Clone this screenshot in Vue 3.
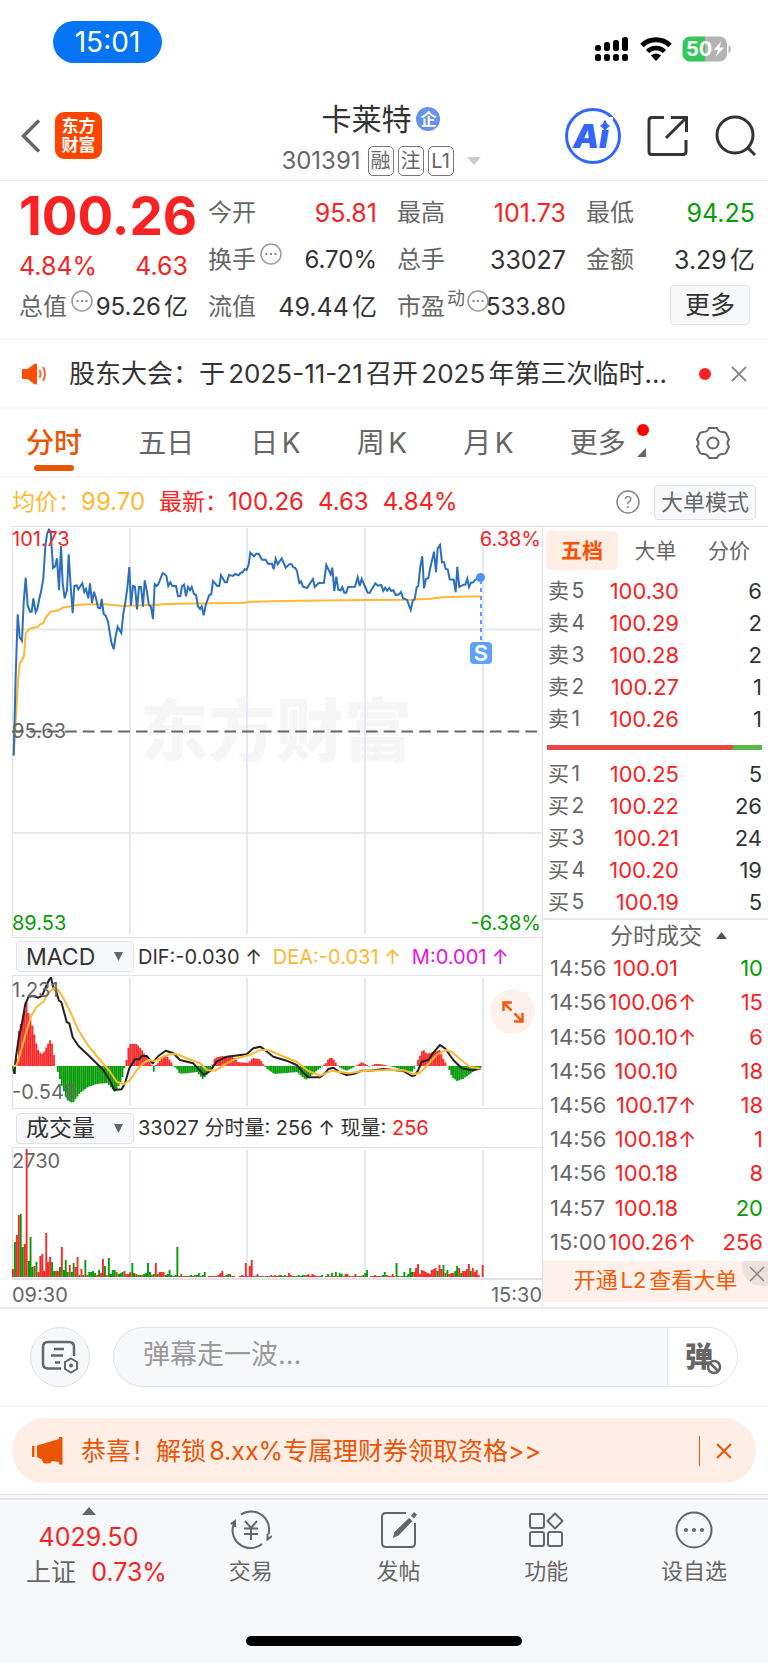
<template>
  <div class="page">
    <div class="status">
      <span class="clock">15:01</span>
      <div class="status-icons">
        <svg width="36" height="26" viewBox="0 0 36 26" aria-hidden="true">
          <g v-for="(top, i) in [9, 6, 4, 1]" :key="i">
            <rect :x="1 + i * 9" :y="top" width="6" :height="15 - top" rx="2.5" />
            <rect :x="1 + i * 9" y="18" width="6" height="7" rx="2.5" />
          </g>
        </svg>
        <svg width="32" height="26" viewBox="0 0 32 26" aria-hidden="true">
          <path d="M2 9.500a20 20 0 0 1 28 0" fill="none" stroke="#000" stroke-width="5" />
          <path d="M7.500 15.500a12 12 0 0 1 17 0" fill="none" stroke="#000" stroke-width="4.500" />
          <path d="M16 25l-5-5.500a7.500 7.500 0 0 1 10 0z" />
        </svg>
        <svg width="50" height="26" viewBox="0 0 50 26" aria-hidden="true">
          <path d="M8 0.500h15v25H8a7.500 7.500 0 0 1-7.500-7.500V8A7.500 7.500 0 0 1 8 0.500z" fill="#34c759" />
          <path d="M23 0.500h14.500A7.500 7.500 0 0 1 45 8v10a7.500 7.500 0 0 1-7.500 7.500H23z" fill="#b3b3b3" />
          <path d="M46.500 9c3 1 3 7 0 8z" fill="#b3b3b3" />
          <text x="4" y="20" class="battery-text">50</text>
          <path d="M39.500 5l-8 9H36l-2.500 7 8.500-9.500h-4.500z" fill="#fff" />
        </svg>
      </div>
    </div>

    <header class="header">
      <div class="header-left">
        <button class="icon-btn" aria-label="返回">
          <svg width="20" height="34" viewBox="0 0 20 34"><path d="M18 1.500L2.500 17 18 32.500" fill="none" stroke="#666" stroke-width="3.500" /></svg>
        </button>
        <a class="logo" href="#"><span>东方</span><span>财富</span></a>
      </div>
      <div class="title">
        <h1>卡莱特<span class="corp">企</span></h1>
        <div class="code">
          <span class="code-num">301391</span>
          <span class="tag">融</span><span class="tag">注</span><span class="tag">L1</span>
          <svg class="code-arrow" width="14" height="8" viewBox="0 0 14 8"><path d="M0 0h14L7 8z" fill="#ccc" /></svg>
        </div>
      </div>
      <div class="header-right">
        <button class="icon-btn" aria-label="Ai">
          <svg width="56" height="58" viewBox="0 0 56 58">
            <circle cx="28" cy="29" r="26.500" fill="#fff" stroke="#3366ff" stroke-width="3" />
            <text x="8 34" y="41" class="ai-text">Ai</text>
            <path d="M35 10h13v12.500H35z" fill="#fff" />
            <path d="M40 13.500q1.200 4.500 4.500 5.500-3.300 1-4.500 5-1.200-4-4.500-5 3.300-1 4.500-5.500z" fill="#3366ff" stroke="#3366ff" />
          </svg>
        </button>
        <button class="icon-btn" aria-label="分享">
          <svg width="42" height="42" viewBox="0 0 42 42" fill="none" stroke="#333" stroke-width="3">
            <path d="M17 2.500H5Q2 2.500 2 5.500v31q0 3 3 3h31q3 0 3-3V25" />
            <path d="M24 2.500h15.500V17M39 3L19 23" />
          </svg>
        </button>
        <button class="icon-btn" aria-label="搜索">
          <svg width="42" height="42" viewBox="0 0 42 42" fill="none" stroke="#333" stroke-width="3">
            <circle cx="20" cy="20" r="18" /><path d="M33 33l7 7" />
          </svg>
        </button>
      </div>
    </header>

    <section class="quote">
      <div class="price-block">
        <strong>100.26</strong>
        <div class="change"><span>4.84%</span><span>4.63</span></div>
      </div>
      <div v-for="q in quotes" :key="q.label" class="cell">
        <span class="cell-label">{{ q.label }}</span>
        <sup v-if="q.sup">{{ q.sup }}</sup>
        <svg v-if="q.tip" class="tip" width="22" height="22" viewBox="0 0 22 22">
          <circle cx="11" cy="11" r="10" fill="none" stroke="#999" stroke-width="1.500" />
          <path d="M5.500 11h2M10 11h2M14.500 11h2" stroke="#888" stroke-width="2" />
        </svg>
        <span class="cell-value" :class="q.tone">{{ q.value }}</span>
      </div>
      <div class="cell more"><button class="soft-btn">更多</button></div>
    </section>

    <section class="notice">
      <svg width="26" height="22" viewBox="0 0 26 22" aria-hidden="true">
        <path d="M1 6h4.500L13 0.500q2-0.500 2 1.500v18q0 2-2 1.500L5.500 16H1q-1 0-1-1V7q0-1 1-1z" fill="#ff4d00" />
        <path d="M17.500 7q2 4 0 8M21 4q4 7 0 14" fill="none" stroke="#ff6a2b" stroke-width="2" />
      </svg>
      <a href="#">股东大会：于2025-11-21召开2025年第三次临时...</a>
      <i class="dot"></i>
      <button class="icon-btn" aria-label="关闭">
        <svg width="16" height="16" viewBox="0 0 16 16"><path d="M1 1l14 14M15 1L1 15" stroke="#888" stroke-width="1.800" /></svg>
      </button>
    </section>

    <nav class="periods">
      <button v-for="(p, i) in periods" :key="p" :class="{ active: i === 0, expandable: i === 5 }">
        {{ p }}
        <template v-if="i === 5">
          <i class="dot period-dot"></i>
          <svg class="corner" width="9" height="9" viewBox="0 0 9 9"><path d="M9 0v9H0z" fill="#666" /></svg>
        </template>
      </button>
      <button aria-label="设置">
        <svg width="34" height="34" viewBox="0 0 34 34" fill="none" stroke="#666" stroke-width="2">
          <path d="M13 2h8q1.500 4 5.500 4 2 0 3.500 1l3 6.500q-3 3.500 0 7L30 27q-1.500 1-3.500 1-4 0-5.500 4h-8q-1.500-4-5.500-4-2 0-3.500-1l-3-6.500q3-3.500 0-7L4 7q1.500-1 3.500-1Q11.500 6 13 2z" />
          <circle cx="17" cy="17" r="5.500" />
        </svg>
      </button>
    </nav>

    <div class="summary">
      <span class="amber"><small>均价：</small>99.70</span>
      <span class="up"><small>最新：</small>100.26</span>
      <span class="up">4.63</span>
      <span class="up">4.84%</span>
      <svg class="help" width="24" height="24" viewBox="0 0 24 24">
        <circle cx="12" cy="12" r="11" fill="none" stroke="#888" stroke-width="1.500" />
        <text x="12" y="18" text-anchor="middle" class="help-text">?</text>
      </svg>
      <button class="soft-btn mode">大单模式</button>
    </div>

    <main class="board">
      <div class="charts">
        <svg class="chart" viewBox="0 0 530 411">
          <text x="128" y="230" class="watermark">东方财富</text>
          <path d="M0.500 411V0.500H530" class="frame" />
          <path d="M118 2v406M235 2v406M353 2v406M471 2v406M0 103.500h530M0 307h530" class="grid" />
          <path d="M0 205.500h528" stroke="#666" stroke-width="2" stroke-dasharray="11.700 6" />
          <polyline :points="average" fill="none" stroke="#fdb933" stroke-width="2" />
          <polyline :points="price" fill="none" stroke="#2c70bd" stroke-width="2" />
          <path d="M469 54v63" stroke="#5a9cf8" stroke-width="2" stroke-dasharray="4 4" />
          <circle cx="468.500" cy="51.500" r="4.500" fill="#4e93f5" />
          <rect x="458" y="116" width="22" height="22" rx="4" fill="#5fa1fb" />
          <text x="469" y="135" text-anchor="middle" class="sell-mark">S</text>
          <text x="0" y="20" class="axis up">101.73</text>
          <text x="529" y="20" text-anchor="end" class="axis up">6.38%</text>
          <text x="0" y="212" class="axis">95.63</text>
          <text x="0" y="404" class="axis down">89.53</text>
          <text x="529" y="404" text-anchor="end" class="axis down">-6.38%</text>
        </svg>

        <div class="indicator">
          <label class="picker">
            <select aria-label="指标"><option>MACD</option></select>
            <svg width="9" height="9" viewBox="0 0 9 9"><path d="M0 0h9L4.500 9z" fill="#666" /></svg>
          </label>
          <span>DIF:-0.030 ↑</span>
          <span class="amber macd-dea">DEA:-0.031 ↑</span>
          <span class="magenta macd-dea">M:0.001 ↑</span>
        </div>
        <div class="macd-wrap">
          <svg class="chart" viewBox="0 0 530 133">
            <path d="M0.500 133V0.500H530" class="frame" />
            <path d="M118 3v128M235 3v128M353 3v128M471 3v128" class="grid" />
            <path :d="macdUp" fill="#f92a2a" />
            <path :d="macdDown" fill="#079c07" />
            <polyline :points="dif" fill="none" stroke="#222" stroke-width="2" stroke-linejoin="round" />
            <polyline :points="dea" fill="none" stroke="#fdb933" stroke-width="2" stroke-linejoin="round" />
            <text x="0" y="22" class="axis">1.231</text>
            <text x="0" y="124" class="axis">-0.549</text>
          </svg>
          <button class="expand" aria-label="放大">
            <svg width="22" height="22" viewBox="0 0 22 22" fill="none" stroke="#f25b0a" stroke-width="2.500">
              <path d="M10 1.500H1.500V10M1.500 1.500l8 8M20.500 12v8.500H12M20.500 20.500l-8-8" />
            </svg>
          </button>
        </div>

        <div class="indicator volume-head">
          <label class="picker">
            <select aria-label="副图指标"><option>成交量</option></select>
            <svg width="9" height="9" viewBox="0 0 9 9"><path d="M0 0h9L4.500 9z" fill="#666" /></svg>
          </label>
          <span>33027 分时量: 256 ↑ 现量: <em>256</em></span>
        </div>
        <svg class="chart" viewBox="0 0 530 133">
          <path d="M0.500 133V0.500H530" class="frame" />
          <path d="M118 3v128M235 3v128M353 3v128M471 3v128" class="grid" />
          <path :d="volumeUp" fill="#f92a2a" />
          <path :d="volumeDown" fill="#079c07" />
          <path d="M0 132h530" stroke="#dfe2e9" stroke-width="2" />
          <text x="0" y="21" class="axis">2730</text>
        </svg>
        <div class="times"><span>09:30</span><span>15:30</span></div>
      </div>

      <aside class="side">
        <div class="side-tabs">
          <button class="on">五档</button><button>大单</button><button>分价</button>
        </div>
        <table class="depth">
          <tbody>
            <tr v-for="r in asks" :key="r[0]"><th>{{ r[0] }}</th><td class="up">{{ r[1] }}</td><td>{{ r[2] }}</td></tr>
          </tbody>
        </table>
        <div class="ratio"></div>
        <table class="depth">
          <tbody>
            <tr v-for="r in bids" :key="r[0]"><th>{{ r[0] }}</th><td class="up">{{ r[1] }}</td><td>{{ r[2] }}</td></tr>
          </tbody>
        </table>
        <button class="ticks-head">
          分时成交
          <svg width="11" height="7" viewBox="0 0 11 7"><path d="M0 7L5.500 0 11 7z" fill="#555" /></svg>
        </button>
        <table class="ticks">
          <tbody>
            <tr v-for="(t, i) in ticks" :key="i">
              <th>{{ t[0] }}</th>
              <td class="up">{{ t[1] }}</td>
              <td class="up arrow">{{ t[2] }}</td>
              <td :class="t[4] || 'up'">{{ t[3] }}</td>
            </tr>
          </tbody>
        </table>
        <div class="level2">
          <a href="#">开通L2查看大单</a>
          <button aria-label="关闭">
            <svg width="16" height="16" viewBox="0 0 16 16"><path d="M1 1l14 14M15 1L1 15" stroke="#888" stroke-width="1.500" /></svg>
          </button>
        </div>
      </aside>
    </main>

    <section class="danmu">
      <button class="danmu-set" aria-label="弹幕设置">
        <svg width="38" height="34" viewBox="0 0 38 34" fill="none" stroke="#666" stroke-width="2.500">
          <path d="M20 28.500H7q-5 0-5-5V7q0-5 5-5h21q5 0 5 5v9M13 9h10M10 15.500h12M14 22.500h5" />
          <path d="M30 18.500l6 3.500v7l-6 3.500-6-3.500v-7z" stroke-width="2" />
          <circle cx="30" cy="25.500" r="2" fill="#666" stroke="none" />
        </svg>
      </button>
      <div class="danmu-box">
        <input type="text" aria-label="弹幕" placeholder="弹幕走一波..." />
        <button aria-label="关闭弹幕">
          <span>弹</span>
          <svg width="16" height="16" viewBox="0 0 16 16"><circle cx="8" cy="8" r="6" fill="#fff" stroke="#666" stroke-width="2.500" /><path d="M4 4l8 8" stroke="#666" stroke-width="2.500" /></svg>
        </button>
      </div>
    </section>

    <section class="promo-wrap">
      <div class="promo">
        <svg width="32" height="28" viewBox="0 0 32 28" fill="#ea5504" aria-hidden="true">
          <path d="M0 9h2.500v11H0zM5 8.500L27 2V0h3.500v27.500H27V25l-7-1q-1 2.500-4 2.500h-3q-2.500 0-3-4L5 20z" />
        </svg>
        <a href="#">恭喜！解锁8.xx%专属理财券领取资格&gt;&gt;</a>
        <button aria-label="关闭">
          <svg width="16" height="16" viewBox="0 0 16 16"><path d="M1 1l14 14M15 1L1 15" stroke="#ea5504" stroke-width="2" /></svg>
        </button>
      </div>
    </section>

    <footer class="footer">
      <div class="tabbar">
        <a href="#" class="index">
          <svg width="14" height="8" viewBox="0 0 14 8"><path d="M0 8L7 0l7 8z" fill="#666" /></svg>
          <span class="up">4029.50</span>
          <span class="index-name">上证<b class="up">0.73%</b></span>
        </a>
        <a href="#">
          <svg width="42" height="40" viewBox="0 0 42 40" fill="none" stroke="#666" stroke-width="2">
            <path d="M11 4.500A18 18 0 0 1 38.500 24M32 34A18 18 0 0 1 4.500 12M0.500 14L5 11v6M42 26l-4.500 3.500V24" />
            <path d="M15 11l6 7 6-7M21 18v12M14 18.500h14M14 24h14" />
          </svg>
          交易
        </a>
        <a href="#">
          <svg width="38" height="40" viewBox="0 0 38 40" fill="none" stroke="#666" stroke-width="2">
            <path d="M26 3H6Q2 3 2 7v26q0 4 4 4h25q4 0 4-4V13" />
            <path d="M29 8l3.500 3L18.500 25.500 13 28l1.500-6zM31 6l3-4 3 2.500-3 4z" fill="#666" stroke="none" />
          </svg>
          发帖
        </a>
        <a href="#">
          <svg width="36" height="40" viewBox="0 0 36 40" fill="none" stroke="#666" stroke-width="2">
            <rect x="2" y="4" width="14" height="14" rx="2" /><rect x="2" y="22" width="14" height="14" rx="2" />
            <rect x="20" y="22" width="14" height="14" rx="2" /><path d="M27 3.500l7.500 7.500-7.500 7.500-7.500-7.500z" stroke-linejoin="round" />
          </svg>
          功能
        </a>
        <a href="#">
          <svg width="40" height="40" viewBox="0 0 40 40">
            <circle cx="20" cy="20" r="17.500" fill="none" stroke="#666" stroke-width="2" />
            <g fill="#666"><circle cx="12" cy="20" r="2" /><circle cx="20" cy="20" r="2" /><circle cx="28" cy="20" r="2" /></g>
          </svg>
          设自选
        </a>
      </div>
      <div class="home"></div>
    </footer>
  </div>
</template>

<script setup>
const quotes = [
  { label: '今开', value: '95.81', tone: 'up' },
  { label: '最高', value: '101.73', tone: 'up' },
  { label: '最低', value: '94.25', tone: 'down' },
  { label: '换手', value: '6.70%', tip: true },
  { label: '总手', value: '33027' },
  { label: '金额', value: '3.29亿' },
  { label: '总值', value: '95.26亿', tip: true },
  { label: '流值', value: '49.44亿' },
  { label: '市盈', value: '533.80', sup: '动', tip: true }
]

const periods = ['分时', '五日', '日K', '周K', '月K', '更多']

const asks = [
  ['卖5', '100.30', 6],
  ['卖4', '100.29', 2],
  ['卖3', '100.28', 2],
  ['卖2', '100.27', 1],
  ['卖1', '100.26', 1]
]
const bids = [
  ['买1', '100.25', 5],
  ['买2', '100.22', 26],
  ['买3', '100.21', 24],
  ['买4', '100.20', 19],
  ['买5', '100.19', 5]
]
const ticks = [
  ['14:56', '100.01', '', 10, 'down'],
  ['14:56', '100.06', '↑', 15],
  ['14:56', '100.10', '↑', 6],
  ['14:56', '100.10', '', 18],
  ['14:56', '100.17', '↑', 18],
  ['14:56', '100.18', '↑', 1],
  ['14:56', '100.18', '', 8],
  ['14:57', '100.18', '', 20, 'down'],
  ['15:00', '100.26', '↑', 256]
]

// Intraday price and average price, in chart units
const price = `1.7,229.7 3.7,149 5.7,88.3 7.7,111.3 10,114.7 11.7,76.3 13.7,51.7 15.7,79.7 18,85.7 19.7,85.7 21.3,72.3
  23.7,86.3 25.3,83 27.3,73 29.3,64.3 31.3,52.3 33.3,20.7 35,8.3 37,3.7 38.7,5.7 41,42 43,40.7 45,32.3 47,64.3
  49,19.7 50.7,57.3 52.7,72.3 55,64 56.7,28.3 58.7,60.7 60.7,87.3 62.3,60 64.7,59.3 66.3,63.3 70.3,57.3 72.3,66
  74,63 76.3,72.3 78,57.3 80,77 82,65.7 84,72.3 86,81.7 88.3,82.3 89.7,73 91.7,88 93.7,89.7 96,95.7 99.3,116.3
  101.7,123.3 103.7,109.7 105.7,100.7 109.3,107 111.3,88 113.3,76.3 115.3,62.3 117.3,41 119,79.7 121,60 123,61
  125,83.3 127,61 129,61 131,80.7 132.7,54.3 135,65.7 136.7,78.3 139,81 141,93 142.7,58 144.7,60 146.3,58.3
  150.7,47 154.3,49.7 156.3,60 158.3,56.3 160.3,60 164,60 166,70.3 168.3,70.3 170,60.3 172,58.7 174,70.3 176,61
  178,64.3 179.7,61 182,68 184,69 186,80.3 188,83 189.7,80.3 191.7,89.3 193.7,79 197.3,69 199.3,68.3 201,55
  205.3,60 207.3,60 209,49.3 213,56.3 215,56.3 217,49 221,50 223,48 226.7,49.3 228.7,46.7 230.7,46.3 232.7,43.3
  234.7,44 236.7,38.3 238.3,26.7 242,30.3 244.3,27.7 246.7,27.7 250,33.7 253.7,33.7 256,37.7 260,37.7 261.7,43.3
  263.7,32.7 265.7,38.3 269.7,32.3 273.7,41.7 277.3,38.3 279.7,38.3 281.3,41.3 283.3,42 285,45 287.3,57 289,55.3
  291,60.7 295,62 301,53 302.7,61 306.7,57 312,56.7 314.3,39 318.7,48.3 320.3,41.7 322.3,65 324.3,50.7 326.3,63.7
  328.7,64.3 330.3,61 332.3,66.7 334.3,66.7 336,61 343,60.7 345.7,51.3 347.7,60 349.7,53 355.7,66.7 357.7,66.7
  363.3,57.3 365.7,59.7 369.3,59 371.3,65 373.3,61.7 375.3,64.7 377.3,62 379.3,65 381.3,64.3 383.7,69 387,68.3
  389,66 391,72.3 395,73.7 398.7,84 400.7,75 402.7,73 404.7,61 406.3,60 408.3,40.7 410.3,30.3 412,62.3 414,53
  416.3,52.3 418.3,41.7 422,25.7 424,46.3 425.7,22.3 428,19 430,36.3 432,36.3 433.7,43 435.7,43.3 437.7,53.3
  441.7,53.7 443.7,66.3 445.3,40.7 447.3,61 451.7,58.7 453.3,58.7 455.3,52.7 457,61 459,56.7 461.3,56.3
  463.3,53.7 468.7,51.3`
const average = `1.7,229 3.7,195.7 5.7,160 7.7,137 10,134.7 12,129.7 13.7,107.3 17.7,102.7 25.3,101 28.7,98 31.3,97
  33.3,92.3 38.7,85.7 46.7,84.3 50.7,81.7 58.7,80.3 64.7,79 76.3,78.3 93.7,78.3 111.3,80 140.7,79 164,77.7
  232.7,76.7 238.7,75.7 271,75 353,74 398,73.7 418,72.7 429.7,71.3 468.7,70.3`

const dif = `1.3,94.3 2.3,98.3 4,81.7 6.7,63.3 10,48.3 13.3,29 16.7,21.7 21.3,21 26.3,22.7 30,21 34,11.7 37,5 39,2.7
  41.3,12.3 44,15.7 47,25.7 49.3,27 54.7,47 57.3,48.3 60.7,62.3 66.3,70.7 76.3,80.3 86.3,90 91.3,95 98,105.7
  102.3,115 109.7,114.3 113,108.3 117.3,93.3 123,84.3 127,84.3 129.7,81 134.7,81 140.7,88.3 146.3,81 153.7,75.7
  161.3,78.3 168,85 181.3,88.3 188,95.7 192,99.7 198,96 204.7,86.7 214.7,81.7 234.7,79.3 241.3,73.3 248,71.7
  251.3,73.7 261.3,81.7 274.7,85.7 284.7,90 291.3,97.7 296.3,102.3 308,102.3 313,98.3 316.3,94 321.3,92.7
  328,97.3 334.7,100 341.3,99 349.7,95.7 358,95.7 371.3,94 391.3,96 399.7,101 403,100.3 406.3,95 409.7,86.7
  416.3,85 421.3,77.7 428,70 433,73.3 441.3,85 449.7,93.3 459.7,95.3 468.7,93.7`
const dea = `1.3,91.7 4.7,90 9.7,73.3 14.7,55 19.7,40 24.7,31.7 31.3,26.7 36.3,18.3 41.3,13.3 46.3,15 53,26 59.7,40
  66.3,55 76.3,70.7 88,85 98,96.7 104.7,106.7 111.3,109.3 118,105 124.7,95 131.3,88.3 136.3,85 143,86 151.3,81.7
  158,79 164.7,79.3 174.7,83.3 188,88.3 194.7,95 203,95.7 214.7,88.3 224.7,83.3 238,80 248,75 256.3,75 268,80
  284.7,86.7 296.3,96 308,100.7 319.7,95.7 336.3,98.3 351.3,96 381.3,94.7 393,95.7 401.3,99.3 408,97.7 416.3,89
  424.7,80 433,75 439.7,76.7 448,84.3 458,91.7 468.7,93.7`

// MACD histogram outline: [x, height], negative is below zero
const histogram = [
  [0, -1], [3, -8], [5, 8], [7, 37], [10, 45], [14.7, 64], [17, 51], [21, 39], [24, 24], [27, 14], [31, 12], [34, 18],
  [38, 26], [40, 23], [43, 6], [44, 0], [46, -6], [50, -20], [55, -34], [61, -37], [68, -27], [76, -21], [85, -18],
  [95, -17], [103, -26], [108, -18], [111, -10], [113, 0], [115, 8], [117, 22], [125, 22], [130, 16], [135, 8],
  [140, 1], [142, -6], [143, 0], [146, 3], [151, 9], [155, 10], [158, 6], [161, 1], [165, -3], [168, -8], [185, -6],
  [191, -13], [198, -6], [200, 0], [203, 8], [210, 10], [221, 9], [226, 4], [236, 3], [241, 8], [248, 7], [252, 1],
  [255, -3], [263, -8], [285, -6], [294, -14], [301, -8], [311, 0], [315, 4], [317, 8], [321, 8], [325, 2],
  [327, -1], [335, -5], [344, 0], [350, 4], [355, 1], [358, -1], [363, 2], [368, 2], [378, 0], [385, -2], [400, -6],
  [404, 0], [406, 6], [411, 17], [415, 12], [428, 16], [431, 8], [435, 1], [437, -3], [440, -11], [445, -15],
  [451, -13], [461, -6], [469, -2]
]

// Volume per minute, negative is a falling minute
const volume = [
  8, -35, 42, 62, -63, -30, 33, 128, -16, -40, -10, 11, -15, 5, 21, 23, 6, 44, 15, 20, -15, -6, 6, 6, -10, 30, -7, -17,
  -5, 12, -5, -14, 10, 20, -2, 8, 2, -17, 2, -5, -5, -6, -4, 2, -7, 4, 18, -11, 2, -19, -3, -7, -7, 5, -3, -4, -5, 6,
  3, 3, 5, -14, -4, 3, -2, -2, 2, -3, -4, -14, -5, 2, -3, 14, -3, 5, 5, 5, -2, -3, -7, -2, 1, -2, -30, 1, 3, -1, 1, 1,
  -1, -2, 1, -2, -2, -4, 1, -2, -5, 0, 1, 1, 1, 1, -1, 2, 4, 6, 1, -2, -3, 3, -1, 1, 0, 0, 1, 2, 1, 14, 1, 11, 17, -1,
  1, 3, -1, -1, 1, -1, 1, -1, 2, 1, 2, -1, 2, -2, -1, -2, 1, 4, 2, -1, -1, 1, -2, -1, -2, -2, 2, 3, 1, 3, 2, 1, 1, -1,
  -2, 0, 1, -3, 1, -4, 1, -5, 1, -4, -3, 1, 3, 3, -1, 1, 1, 3, 1, -1, -1, 2, -4, -7, 0, 1, 1, 2, 1, 1, 1, -2, -5, 2, 1,
  1, 3, 1, -14, -1, 1, -1, -5, -1, -3, -9, -5, 5, 9, 13, 3, 7, 6, 5, 4, 3, 7, 8, 9, -6, 12, 8, -12, 4, -7, 3, 4, 4,
  -6, -11, 9, -4, 6, 6, 8, 13, -6, 9, 5, 7, 2, 0, 12
]

const STEP = 1.957

function heightAt(x) {
  const i = histogram.findIndex((p) => p[0] > x)
  if (i < 1) return 0
  const [x0, h0] = histogram[i - 1]
  const [x1, h1] = histogram[i]
  return h0 + ((h1 - h0) * (x - x0)) / (x1 - x0)
}

function bar(x, top, height, width) {
  return `M${x.toFixed(1)} ${top.toFixed(1)}h${width}v${height.toFixed(1)}h-${width}z`
}

const bars = Array.from({ length: 240 }, (_, i) => [i * STEP, heightAt(i * STEP + 1)])
const macdUp = bars.filter((b) => b[1] > 0).map(([x, h]) => bar(x, 91 - h, h, 1.8)).join('')
const macdDown = bars.filter((b) => b[1] < 0).map(([x, h]) => bar(x, 91, -h, 1.8)).join('')

const volumes = volume.map((v, i) => [i * STEP, v])
const volumeUp = volumes.filter((b) => b[1] > 0).map(([x, h]) => bar(x, 130 - h, h, 1.9)).join('')
const volumeDown = volumes.filter((b) => b[1] < 0).map(([x, h]) => bar(x, 130 + h, -h, 1.9)).join('')
</script>

<style>
* {
  box-sizing: border-box;
}

body {
  margin: 0;
  background: #fff;
}
</style>

<style scoped>
.page {
  font-family: Inter, "Noto Sans CJK SC", sans-serif;
  font-size: 24px;
  line-height: 32px;
  color: #333;
  white-space: nowrap;
  text-autospace: normal;
}

button,
input,
select {
  font: inherit;
  color: inherit;
  border: 0;
  padding: 0;
  background: none;
}

a {
  color: inherit;
  text-decoration: none;
}

b,
em,
th {
  font-weight: 400;
  font-style: normal;
}

svg {
  display: block;
  flex: none;
}

.up {
  color: #f92222;
  fill: #f92222;
}

.down {
  color: #079c07;
  fill: #079c07;
}

.amber {
  color: #fdb933;
}

.magenta {
  color: #e015e0;
}

.icon-btn {
  display: block;
}

/* status bar */
.status {
  display: flex;
  justify-content: space-between;
  height: 90px;
  padding: 21px 36px 0 53px;
}

.clock {
  width: 109px;
  height: 42px;
  line-height: 42px;
  border-radius: 21px;
  background: #0574f5;
  color: #fff;
  font-size: 28px;
  text-align: center;
}

.status-icons {
  display: flex;
  gap: 10px;
  padding-top: 15px;
}

.battery-text {
  font-size: 20px;
  font-weight: 700;
  fill: #fff;
}

/* header */
.header {
  display: grid;
  grid-template-columns: 1fr auto 1fr;
  align-items: center;
  height: 91px;
  padding: 0 11px 0 5px;
  border-bottom: 1px solid #eee;
}

.header-left,
.header-right {
  display: flex;
  align-items: center;
}

.header-left {
  gap: 14px;
  padding-left: 16px;
}

.header-right {
  justify-content: flex-end;
  gap: 26px;
}

.logo {
  display: flex;
  flex-direction: column;
  align-items: center;
  justify-content: center;
  width: 47px;
  height: 47px;
  border-radius: 9px;
  background: #ff4400;
  color: #fff;
  font-size: 17px;
  font-weight: 700;
  line-height: 19px;
}

.title {
  padding-top: 7px;
}

.title h1 {
  display: flex;
  align-items: center;
  justify-content: center;
  gap: 5px;
  margin: 0;
  font-size: 30px;
  font-weight: 400;
  line-height: 44px;
}

.corp {
  width: 24px;
  height: 24px;
  line-height: 24px;
  border-radius: 50%;
  background: #6692ee;
  color: #fff;
  font-size: 16px;
  font-weight: 700;
  text-align: center;
}

.code {
  display: flex;
  align-items: center;
  gap: 4px;
  height: 40px;
  color: #666;
}

.code-num {
  margin-right: 3px;
}

.tag {
  min-width: 26px;
  height: 30px;
  padding: 0 2px;
  line-height: 28px;
  border: 1px solid #777;
  border-radius: 5px;
  font-size: 20px;
  text-align: center;
}

.code-arrow {
  margin-left: 9px;
}

.ai-text {
  font-size: 33px;
  font-weight: 900;
  font-style: italic;
  fill: #3366ff;
}

/* quote */
.quote {
  display: grid;
  grid-template-columns: repeat(4, minmax(0, 1fr));
  grid-auto-rows: 47px;
  column-gap: 20px;
  padding: 8px 13px 8px 19px;
  border-bottom: 2px solid #f5f5f5;
}

.price-block {
  grid-row: span 2;
  color: #f92222;
}

.price-block strong {
  display: block;
  font-size: 53px;
  font-weight: 700;
  line-height: 54px;
}

.change {
  display: flex;
  justify-content: space-between;
  padding-top: 6px;
  font-size: 25px;
  line-height: 34px;
}

.cell {
  display: flex;
  align-items: center;
}

.cell-label {
  color: #666;
}

.cell sup {
  margin: 0 2px 16px;
  font-size: 18px;
  line-height: 18px;
  color: #666;
}

.tip {
  margin: 0 0 12px 4px;
}

sup + .tip {
  margin-left: 0;
}

.cell-value {
  flex: 1;
  min-width: 0;
  display: flex;
  justify-content: flex-end;
  font-size: 25px;
}

.tip + .cell-value {
  font-size: 24px;
}

.soft-btn {
  height: 40px;
  border: 1px solid #dfe2e9;
  border-radius: 4px;
  background: #f7f8fa;
}

.more {
  justify-content: flex-end;
  padding: 0 5px 4px 0;
}

.more .soft-btn {
  width: 80px;
  font-size: 25px;
}

/* notice */
.dot {
  width: 12px;
  height: 12px;
  border-radius: 50%;
  background: #f92222;
}

.notice {
  display: flex;
  align-items: center;
  height: 69px;
  padding: 0 21px 0 22px;
  border-bottom: 2px solid #f5f5f5;
}

.notice a {
  flex: 1;
  min-width: 0;
  margin-left: 21px;
  font-size: 26px;
}

.notice .icon-btn {
  margin-left: 20px;
}

/* period tabs */
.periods {
  display: flex;
  align-items: center;
  justify-content: space-between;
  height: 69px;
  padding: 0 38px 0 26px;
  border-bottom: 2px solid #f5f5f5;
  color: #666;
  font-size: 28px;
}

.periods button {
  position: relative;
  height: 67px;
}

.periods .active {
  color: #ea5504;
  font-weight: 500;
}

.periods .active::after {
  content: "";
  position: absolute;
  left: 8px;
  right: 8px;
  bottom: 5px;
  height: 6px;
  border-radius: 3px;
  background: #ea5504;
}

.periods .expandable {
  margin-right: 14px;
}

.period-dot {
  position: absolute;
  top: 15px;
  right: -23px;
  background: #f00;
}

.corner {
  position: absolute;
  top: 39px;
  right: -20px;
}

/* summary line */
.summary {
  display: flex;
  align-items: center;
  gap: 14px;
  height: 48px;
  padding: 0 12px;
}

.summary small {
  font-size: 23px;
}

.help {
  margin-left: auto;
}

.help-text {
  font-size: 16px;
  fill: #888;
}

.mode {
  height: 35px;
  padding: 0 6px;
  color: #666;
  font-size: 22px;
}

/* charts */
.board {
  display: flex;
  border-bottom: 2px solid #e9ebf0;
}

.charts {
  flex: 1;
  min-width: 0;
  padding-left: 12px;
}

.chart {
  width: 100%;
  height: auto;
}

.frame {
  fill: none;
  stroke: #dfe2e9;
}

.grid {
  fill: none;
  stroke: #e4e8f0;
  stroke-width: 2;
}

.watermark {
  font-size: 68px;
  font-weight: 900;
  fill: #f6f6f6;
}

.axis {
  font-size: 20px;
}

.axis:not(.up):not(.down) {
  fill: #666;
}

.sell-mark {
  font-size: 22px;
  font-weight: 600;
  fill: #fff;
}

.indicator {
  display: flex;
  align-items: center;
  height: 38px;
  border-top: 1px solid #dfe2e9;
  font-size: 20px;
}

.volume-head {
  height: 39px;
}

.indicator em {
  color: #f92222;
}

.macd-dea {
  margin-left: 11px;
}

.picker {
  position: relative;
  display: flex;
  align-items: center;
  width: 118px;
  height: 31px;
  margin: 0 4px;
  border: 1px solid #dfe2e9;
  border-radius: 4px;
  background: #f7f8fa;
}

.picker select {
  width: 100%;
  padding-left: 9px;
  appearance: none;
  font-size: 23px;
  line-height: 28px;
}

.picker svg {
  position: absolute;
  right: 10px;
  pointer-events: none;
}

.macd-wrap {
  position: relative;
}

.expand {
  position: absolute;
  top: 14px;
  right: 7px;
  display: flex;
  align-items: center;
  justify-content: center;
  width: 45px;
  height: 45px;
  border-radius: 50%;
  background: #fef1eb;
}

.times {
  display: flex;
  justify-content: space-between;
  height: 27px;
  line-height: 30px;
  color: #666;
  font-size: 20px;
}

/* order book */
.side {
  display: flex;
  flex-direction: column;
  width: 226px;
  border-top: 1px solid #dfe2e9;
  border-left: 1px solid #dfe2e9;
  font-size: 22px;
}

.side-tabs {
  display: flex;
  justify-content: space-between;
  padding: 4px 3px 5px;
  color: #666;
}

.side-tabs button {
  width: 72px;
  height: 39px;
  border-radius: 5px;
  font-size: 21px;
}

.side-tabs .on {
  background: #feeee6;
  color: #ff5000;
  font-weight: 700;
}

table {
  border-collapse: collapse;
  table-layout: fixed;
}

th,
td {
  padding: 0;
  text-align: right;
}

th {
  text-align: left;
  color: #666;
}

.depth {
  margin: 0 6px 0 5px;
}

.depth tr {
  height: 32px;
}

.depth th {
  width: 48px;
  font-size: 21px;
}

.depth td:nth-child(2) {
  width: 83px;
}

.ratio {
  height: 5px;
  margin: 10px 6px 8px 4px;
  background: linear-gradient(120deg, #e94646 86%, #5db947 86%);
}

.ticks-head {
  display: flex;
  align-items: center;
  justify-content: center;
  gap: 14px;
  height: 33px;
  padding-left: 26px;
  border-top: 2px solid #e4e8f0;
  color: #666;
  font-size: 23px;
}

.ticks {
  height: 308px;
  margin: 0 5px 0 7px;
}

.ticks th {
  width: 58px;
}

.ticks td:nth-child(2) {
  width: 70px;
}

.ticks .arrow {
  width: 15px;
  text-align: left;
}

.level2 {
  position: relative;
  height: 41px;
  margin-top: auto;
  margin-bottom: 5px;
  background: #fef1eb;
  color: #f25b0a;
  line-height: 39px;
  text-align: center;
}

.level2 a {
  font-size: 22px;
}

.level2 button {
  position: absolute;
  top: 0;
  right: 0;
  width: 26px;
  height: 25px;
  padding-left: 7px;
  border-bottom-left-radius: 20px;
  background: #ede1dc;
}

/* danmu */
.danmu {
  display: flex;
  gap: 23px;
  padding: 18px 30px;
  border-bottom: 2px solid #f5f5f5;
}

.danmu-set,
.danmu-box {
  height: 60px;
  border: 1px solid #dfe2e9;
  border-radius: 30px;
  background: #f7f8fa;
}

.danmu-set {
  display: flex;
  flex: none;
  align-items: center;
  justify-content: center;
  width: 60px;
}

.danmu-box {
  display: flex;
  flex: 1;
  overflow: hidden;
}

.danmu-box input {
  flex: 1;
  min-width: 0;
  padding: 0 0 5px 29px;
  font-size: 27px;
}

.danmu-box input::placeholder {
  color: #999;
}

.danmu-box button {
  position: relative;
  width: 70px;
  border-left: 1px solid #dfe2e9;
  background: #fff;
  color: #666;
  font-size: 28px;
  font-weight: 900;
  text-align: left;
  padding-left: 17px;
}

.danmu-box button svg {
  position: absolute;
  right: 15px;
  bottom: 11px;
}

/* promo */
.promo-wrap {
  padding: 11px 12px;
}

.promo {
  display: flex;
  align-items: center;
  height: 65px;
  padding: 0 24px 0 20px;
  border-radius: 33px;
  background: #feeee6;
  color: #ea5504;
}

.promo a {
  flex: 1;
  min-width: 0;
  margin-left: 17px;
  font-size: 25px;
}

.promo button {
  display: flex;
  align-items: center;
  height: 30px;
  padding-left: 16px;
  border-left: 1px solid #ea5504;
}

/* footer */
.footer {
  padding-bottom: 17px;
  border-top: 1px solid #dfe2e9;
  background: #f7f8fa;
}

.tabbar {
  display: flex;
  height: 138px;
  margin-top: 3px;
  border-top: 2px solid #e5e5e5;
  color: #666;
  font-size: 22px;
}

.tabbar a {
  display: flex;
  flex: 1;
  flex-direction: column;
  align-items: center;
  padding-top: 10px;
  line-height: 42px;
}

.tabbar .index {
  flex: 0 0 177px;
  padding-top: 7px;
  font-size: 25px;
  line-height: 35px;
}

.index > .up {
  margin-top: 5px;
}

.index-name {
  padding-left: 16px;
}

.index b {
  margin-left: 12px;
}

.home {
  width: 36%;
  height: 10px;
  margin: 0 auto;
  border-radius: 5px;
  background: #000;
}
</style>
